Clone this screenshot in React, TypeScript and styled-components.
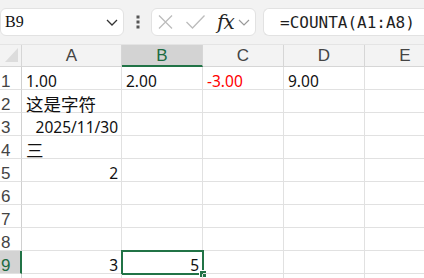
import React from 'react';
import styled, { createGlobalStyle } from 'styled-components';

const Global = createGlobalStyle`
  html, body { margin: 0; padding: 0; background: #fff; overflow: hidden; }
  body { font-family: "Liberation Sans", "Noto Sans CJK SC", sans-serif; }
  #root { width: 424px; height: 278px; overflow: hidden; }
`;

const GREEN = '#217346';

const Page = styled.div`
  width: 424px;
  height: 278px;
  overflow: hidden;
  display: flex;
  flex-direction: column;
  background: #fff;
`;

const Toolbar = styled.div`
  flex: none;
  height: 44px;
  background: #f2f2f2;
  border-bottom: 1px solid #e4e4e4;
  display: flex;
  align-items: center;
`;

const Box = styled.div`
  box-sizing: border-box;
  height: 28px;
  background: #fff;
  border: 1px solid #e2e2e2;
  border-radius: 6px;
  display: flex;
  align-items: center;
  flex: none;
`;

const NameBox = styled(Box)`
  width: 124px;
  padding: 0 5px 0 4px;
  justify-content: space-between;
`;

const NameText = styled.span`
  font-family: "Liberation Serif", serif;
  font-size: 16px;
  color: #111;
`;

const DotsSlot = styled.div`
  width: 27px;
  display: flex;
  justify-content: center;
  flex: none;
`;

const ButtonBox = styled(Box)`
  width: 105px;
  padding-left: 6px;
`;

const IconSlot = styled.span<{ $gap: number }>`
  display: flex;
  align-items: center;
  margin-right: ${(p) => p.$gap}px;
`;

const Fx = styled.span`
  font-family: "DejaVu Serif", "Liberation Serif", serif;
  font-style: italic;
  font-size: 20px;
  font-weight: 500;
  color: #262626;
  margin-right: 4px;
  line-height: 1;
  letter-spacing: -1px;
`;

const FormulaBox = styled(Box)`
  margin-left: 7px;
  width: 200px;
  padding-left: 16px;
  border-right: none;
  border-radius: 6px 0 0 6px;
`;

const FormulaText = styled.span`
  font-family: "DejaVu Sans Mono", monospace;
  font-size: 16px;
  color: #1e1e1e;
  white-space: pre;
`;

const Sheet = styled.div`
  display: grid;
  grid-template-columns: 22px 100px 81px 81px 81px 81px;
  grid-template-rows: 22px;
  grid-auto-rows: 23px;
  width: 446px;
`;

const Corner = styled.div`
  position: relative;
  box-sizing: border-box;
  background: #f3f3f3;
  border-right: 1px solid #d6d6d6;
  border-bottom: 1px solid #d6d6d6;
  &::after {
    content: '';
    position: absolute;
    left: 5px;
    top: 3px;
    width: 13px;
    height: 14px;
    background: #dcdcdc;
    clip-path: polygon(100% 0, 100% 100%, 0 100%);
  }
`;

const ColHead = styled.div<{ $sel?: boolean }>`
  box-sizing: border-box;
  background: ${(p) => (p.$sel ? '#d3d3d3' : '#f3f3f3')};
  color: ${(p) => (p.$sel ? '#1b6b41' : '#444')};
  border-right: 1px solid #d6d6d6;
  border-bottom: ${(p) => (p.$sel ? `2px solid ${GREEN}` : '1px solid #d6d6d6')};
  display: flex;
  align-items: center;
  justify-content: center;
  font-size: 17px;
  padding-top: 1px;
`;

const RowHead = styled.div<{ $sel?: boolean }>`
  box-sizing: border-box;
  background: ${(p) => (p.$sel ? '#d3d3d3' : '#fff')};
  color: ${(p) => (p.$sel ? '#1b6b41' : '#444')};
  border-right: ${(p) => (p.$sel ? `2px solid ${GREEN}` : '1px solid #d0d0d0')};
  border-bottom: 1px solid #e1e1e1;
  display: flex;
  align-items: flex-end;
  padding-left: 1px;
  font-size: 17px;
  line-height: 15px;
`;

const Cell = styled.div<{ $align?: 'left' | 'right'; $color?: string; $cjk?: boolean }>`
  position: relative;
  box-sizing: border-box;
  border-right: 1px solid #e1e1e1;
  border-bottom: 1px solid #e1e1e1;
  display: flex;
  align-items: flex-end;
  justify-content: ${(p) => (p.$align === 'right' ? 'flex-end' : 'flex-start')};
  padding: 0 3px 0 4px;
  font-family: "Noto Sans", "Noto Sans CJK SC", sans-serif;
  font-size: ${(p) => (p.$cjk ? '17.5px' : '15.5px')};
  line-height: 15px;
  color: ${(p) => p.$color || '#111'};
  white-space: nowrap;
`;

const Selection = styled.div`
  position: absolute;
  left: -1px;
  top: -1px;
  right: -2px;
  bottom: -2px;
  border: 2px solid ${GREEN};
  pointer-events: none;
`;

const Handle = styled.div`
  position: absolute;
  right: -5px;
  bottom: -5px;
  width: 6px;
  height: 6px;
  background: ${GREEN};
  border: 1px solid #fff;
`;

type CellData = { text?: string; align?: 'left' | 'right'; color?: string; cjk?: boolean };

const rows: CellData[][] = [
  [{ text: '1.00' }, { text: '2.00' }, { text: '-3.00', color: '#ff0000' }, { text: '9.00' }, {}],
  [{ text: '这是字符', cjk: true }, {}, {}, {}, {}],
  [{ text: '2025/11/30', align: 'right' }, {}, {}, {}, {}],
  [{ text: '三', cjk: true }, {}, {}, {}, {}],
  [{ text: '2', align: 'right' }, {}, {}, {}, {}],
  [{}, {}, {}, {}, {}],
  [{}, {}, {}, {}, {}],
  [{}, {}, {}, {}, {}],
  [{ text: '3', align: 'right' }, { text: '5', align: 'right' }, {}, {}, {}],
  [{}, {}, {}, {}, {}],
];

const cols = ['A', 'B', 'C', 'D', 'E'];

export default function App() {
  return (
    <Page>
      <Global />
      <Toolbar>
        <NameBox>
          <NameText>B9</NameText>
          <svg width="12" height="7" viewBox="0 0 12 7">
            <polyline points="1,1 6,6 11,1" fill="none" stroke="#333" strokeWidth="1.3" />
          </svg>
        </NameBox>
        <DotsSlot>
          <svg width="4" height="14" viewBox="0 0 4 14">
            <rect x="0.5" y="0.5" width="3" height="3" fill="#555" />
            <rect x="0.5" y="5.5" width="3" height="3" fill="#555" />
            <rect x="0.5" y="10.5" width="3" height="3" fill="#555" />
          </svg>
        </DotsSlot>
        <ButtonBox>
          <IconSlot $gap={13}>
            <svg width="15" height="14" viewBox="0 0 15 14">
              <path d="M1 0.5 L14 13.5 M14 0.5 L1 13.5" stroke="#bcbcbc" strokeWidth="1.3" fill="none" />
            </svg>
          </IconSlot>
          <IconSlot $gap={12}>
            <svg width="19" height="14" viewBox="0 0 19 14">
              <polyline points="0.5,7 6.5,13 18.5,0.5" fill="none" stroke="#bcbcbc" strokeWidth="1.3" />
            </svg>
          </IconSlot>
          <Fx>fx</Fx>
          <IconSlot $gap={0}>
            <svg width="12" height="7" viewBox="0 0 12 7">
              <polyline points="1,1 6,6 11,1" fill="none" stroke="#9a9a9a" strokeWidth="1.2" />
            </svg>
          </IconSlot>
        </ButtonBox>
        <FormulaBox>
          <FormulaText>=COUNTA(A1:A8)</FormulaText>
        </FormulaBox>
      </Toolbar>
      <Sheet>
        <Corner />
        {cols.map((c) => (
          <ColHead key={c} $sel={c === 'B'}>
            {c}
          </ColHead>
        ))}
        {rows.map((r, ri) => (
          <React.Fragment key={ri}>
            <RowHead $sel={ri === 8}>{ri < 9 ? ri + 1 : null}</RowHead>
            {r.map((cell, ci) => (
              <Cell key={ci} $align={cell.align} $color={cell.color} $cjk={cell.cjk}>
                {cell.text}
                {ri === 8 && ci === 1 && (
                  <Selection>
                    <Handle />
                  </Selection>
                )}
              </Cell>
            ))}
          </React.Fragment>
        ))}
      </Sheet>
    </Page>
  );
}
